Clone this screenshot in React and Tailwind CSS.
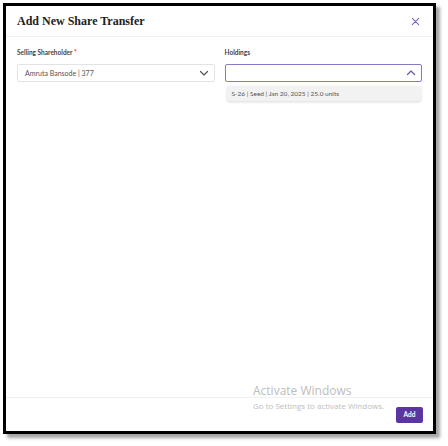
import React from 'react';

const ChevronDown = ({ className }) => (
  <svg viewBox="0 0 24 24" className={className} fill="none" stroke="currentColor" strokeWidth="2.4" strokeLinecap="round" strokeLinejoin="round">
    <path d="M5 9l7 7 7-7" />
  </svg>
);

const ChevronUp = ({ className }) => (
  <svg viewBox="0 0 24 24" className={className} fill="none" stroke="currentColor" strokeWidth="2.6" strokeLinecap="round" strokeLinejoin="round">
    <path d="M5 15l7-7 7 7" />
  </svg>
);

const App = () => {
  return (
    <div className="w-[448px] h-[446px] bg-white pt-[3px] pl-[3px] font-['Lato','Noto_Sans',sans-serif]">
      <div className="w-[433px] h-[431px] border-[3px] border-black bg-white shadow-[4px_4px_3px_rgba(0,0,0,0.35)] flex flex-col relative">
        {/* Header */}
        <div className="h-[31px] flex items-center justify-between pl-[11px] pr-[12px] border-b border-[#f0f0f0]">
          <h2 className="text-[12px] font-bold text-[#222] font-['Liberation_Serif','DejaVu_Serif',serif]">Add New Share Transfer</h2>
          <svg viewBox="0 0 24 24" className="w-[11px] h-[11px] text-[#7a62bf]" fill="none" stroke="currentColor" strokeWidth="2.2" strokeLinecap="round">
            <path d="M5 5l14 14M19 5L5 19" />
          </svg>
        </div>

        {/* Body */}
        <div className="flex-1 px-[11px] pt-[11px]">
          <div className="grid grid-cols-2 gap-[10px]">
            <div>
              <div className="text-[6.5px] font-bold text-[#444] mb-[7px] leading-[9px]">
                Selling Shareholder <span className="text-red-500">*</span>
              </div>
              <div className="h-[18px] border border-[#e3e3e3] rounded-[2px] flex items-center justify-between pl-[7px] pr-[4px]">
                <span className="text-[7px] text-[#555]">Amruta Bansode | 377</span>
                <ChevronDown className="w-[12px] h-[12px] text-[#555]" />
              </div>
            </div>
            <div className="relative">
              <div className="text-[6.5px] font-bold text-[#444] mb-[7px] leading-[9px]">Holdings</div>
              <div className="h-[18px] border border-[#8b78c4] rounded-[2px] flex items-center justify-end pr-[4px]">
                <ChevronUp className="w-[12px] h-[12px] text-[#6e55b5]" />
              </div>
              <div className="absolute left-[2px] right-[1px] top-[38px] h-[15px] bg-[#f2f2f2] rounded-[2px] shadow-[0_1px_3px_rgba(0,0,0,0.15)] flex items-center pl-[5px]">
                <span className="text-[6.5px] text-[#555]">S-26 | Seed | Jan 20, 2025 | 25.0 units</span>
              </div>
            </div>
          </div>
        </div>

        {/* Windows watermark */}
        <div className="absolute left-[247px] top-[377px] text-[#bdbdbd] font-['Open_Sans','Noto_Sans',sans-serif] pointer-events-none">
          <div className="text-[12px] leading-[16px]">Activate Windows</div>
          <div className="text-[8px] leading-[12px] mt-[1px]">Go to Settings to activate Windows.</div>
        </div>

        {/* Footer */}
        <div className="h-[34px] border-t border-[#f0f0f0] flex items-center justify-end pr-[10px]">
          <button className="h-[16px] w-[27px] bg-[#5b36a3] text-white text-[6.5px] font-bold rounded-[2px]">Add</button>
        </div>
      </div>
    </div>
  );
};

export default App;
